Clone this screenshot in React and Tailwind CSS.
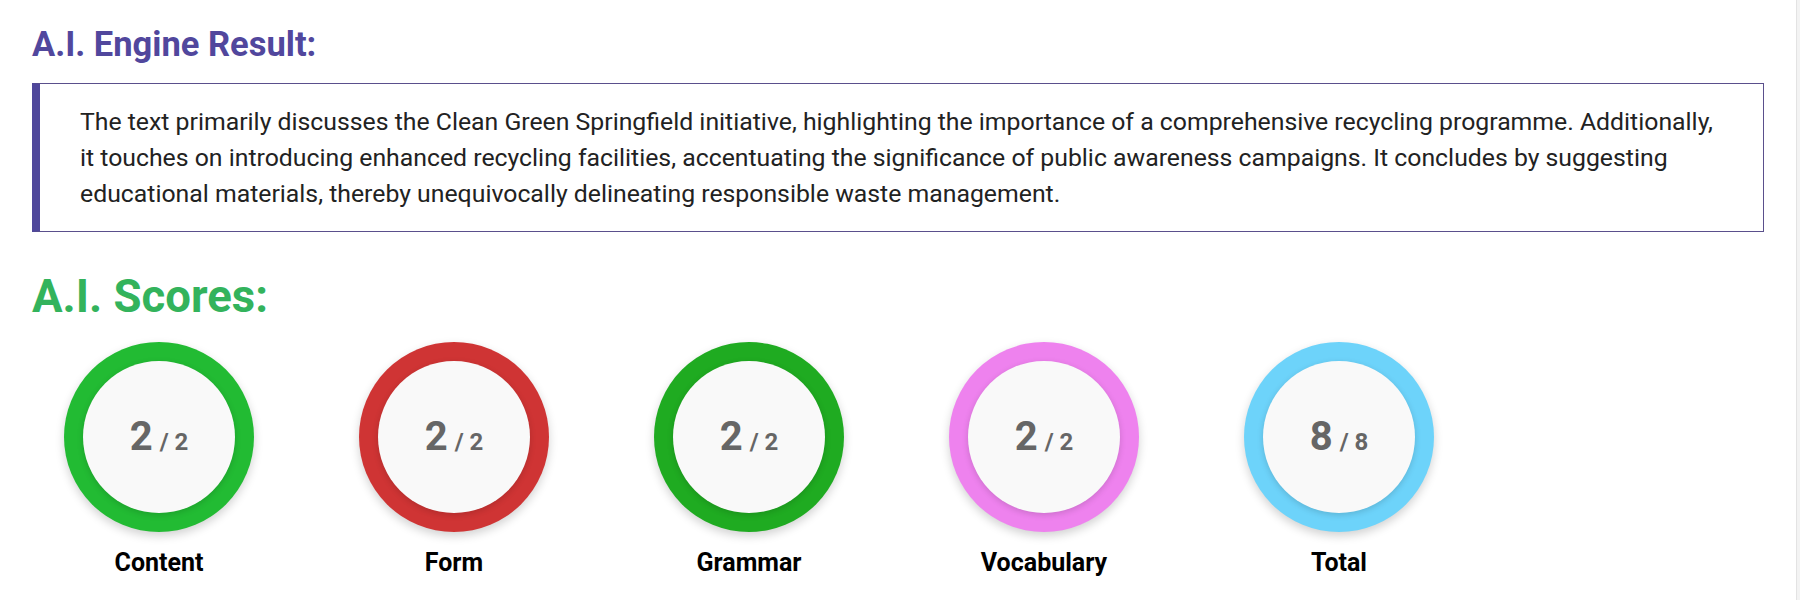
import React from "react";

const scores = [
  { label: "Content", score: 2, max: 2, ring: "bg-[#22bb33]" },
  { label: "Form", score: 2, max: 2, ring: "bg-[#cf3434]" },
  { label: "Grammar", score: 2, max: 2, ring: "bg-[#1fab21]" },
  { label: "Vocabulary", score: 2, max: 2, ring: "bg-[#ee82ee]" },
  { label: "Total", score: 8, max: 8, ring: "bg-[#6dd3fa]" },
];

function ScoreCircle({ label, score, max, ring }) {
  return (
    <div className="flex flex-col items-center w-[190px]">
      <div
        className={`w-[190px] h-[190px] rounded-full p-[19px] shadow-[0_4px_10px_rgba(0,0,0,0.18)] ${ring}`}
      >
        <div className="w-full h-full rounded-full bg-[#f9f9f9] shadow-[0_2px_6px_rgba(0,0,0,0.15)] flex items-center justify-center">
          <span className="flex items-baseline text-[#666] font-bold">
            <span className="text-[40px] leading-none">{score}</span>
            <span className="text-[24px] leading-none ml-[7px]">/ {max}</span>
          </span>
        </div>
      </div>
      <div className="mt-[16px] text-[25px] leading-[30px] font-bold text-black">
        {label}
      </div>
    </div>
  );
}

export default function App() {
  return (
    <div className="flex w-full h-[600px] bg-white font-['Roboto',sans-serif] overflow-hidden">
      <div className="flex-1 px-8 pt-[24px]">
        {/* resultado del motor */}
        <h2 className="text-[34.5px] leading-[40px] font-bold text-[#51479d]">
          A.I. Engine Result:
        </h2>
        <div className="mt-[19px] border border-[#5a4f8c] border-l-8 border-l-[#4f479b] pl-10 pr-10 pt-5 pb-[19px]">
          <p className="text-[24.8px] leading-[36px] text-[#222]">
            The text primarily discusses the Clean Green Springfield
            initiative, highlighting the importance of a comprehensive
            recycling programme. Additionally, it touches on introducing
            enhanced recycling facilities, accentuating the significance of
            public awareness campaigns. It concludes by suggesting educational
            materials, thereby unequivocally delineating responsible waste
            management.
          </p>
        </div>

        <h2 className="mt-[38px] text-[45.5px] leading-[53px] font-bold text-[#33b35c]">
          A.I. Scores:
        </h2>
        <div className="mt-[19px] pl-8 flex gap-[105px]">
          {scores.map((s) => (
            <ScoreCircle key={s.label} {...s} />
          ))}
        </div>
      </div>
      <div className="w-[4px] border-l border-[#e3e3e3] bg-[#f3f3f3]" />
    </div>
  );
}
